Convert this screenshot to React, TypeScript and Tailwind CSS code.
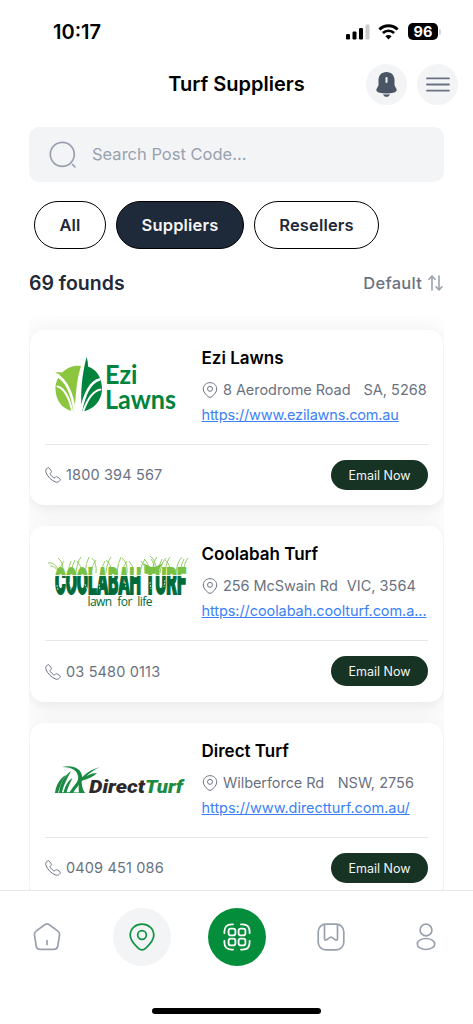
import { ReactNode } from 'react'

type Supplier = {
  name: string
  street: string
  region: string
  regionGap: string
  url: string
  urlTracking: string
  phone: string
  logo: ReactNode
}

function PinIcon({ className, strokeWidth = 1.5 }: { className: string; strokeWidth?: number }) {
  return (
    <svg className={className} viewBox="0 0 24 24" fill="none" stroke="currentColor" strokeWidth={strokeWidth}>
      <path d="M12 23c-1.100 0-2.200-.500-3.100-1.300C5.500 18.600 1.900 14.900 1.900 10.600 1.900 4.600 6.700 1 12 1s10.100 3.600 10.100 9.600c0 4.300-3.600 8-7 11.100-.900.800-2 1.300-3.100 1.300Z" />
      <circle cx="12" cy="10.300" r="3.700" />
    </svg>
  )
}

function PhoneIcon() {
  return (
    <svg className="h-4 w-4 shrink-0" viewBox="0 0 24 24" fill="none" stroke="currentColor" strokeWidth="1.500" strokeLinejoin="round">
      <path d="M6.500 1.900c-.7-1.100-2-1.200-2.900-.4L2.300 2.800C.8 4.300.8 6.500 1.700 8.700c2.600 6 7.500 10.900 13.600 13.600 2.200.9 4.400.8 5.900-.7l1.200-1.300c.9-.9.800-2.200-.3-3l-3.500-2.300c-1-.7-2.100-.500-2.900.3l-.7.700c-.6.6-1.500.6-2.200.1-1.900-1.300-3.500-2.900-4.800-4.800-.5-.7-.500-1.500.1-2.200l.7-.7c.8-.8 1-1.900.3-2.900L6.500 1.900Z" />
    </svg>
  )
}

function EziLogo() {
  return (
    <svg width="130" height="70" viewBox="0 0 130 70">
      <path d="M30 13C17 11 4.500 22 4.500 36 4.500 48 12 57 23.500 58.700 25 43 25 28 30 13Z" fill="#8cc63f" />
      <path d="M4 19.500c6-1 10 0 14 4l-3 4C12 24 9 21 4 19.500Z" fill="#8cc63f" />
      <path d="M35.500 4c1 3 1.700 6 1.500 9.500C45 16 51 24 51 36c0 12-9 21-20 22.700C29 40 31 22 35.500 4Z" fill="#00843d" />
      <g fill="none" stroke="#fff" strokeLinecap="round">
        <path d="M5.500 22C15 27 21 38 24 60" strokeWidth="2.600" />
        <path d="M6.500 33.500C13 35 19 45 21.500 60" strokeWidth="2" />
        <path d="M48.500 26.500C39 29 33 42 29.500 60" strokeWidth="2.600" />
        <path d="M49.500 36.500C41 38 36 47 32 59" strokeWidth="2" />
      </g>
      <g fill="#00843d" fontFamily="Lato, sans-serif" fontWeight="700" fontSize="26.500">
        <text x="54" y="31" textLength="32.500" lengthAdjust="spacingAndGlyphs">Ezi</text>
        <text x="54" y="56" textLength="71" lengthAdjust="spacingAndGlyphs">Lawns</text>
      </g>
    </svg>
  )
}

const blades = [
  [10, 5, 5], [14, 2, -5], [19, 5, 3], [22, 4, 4], [27, 1, 5], [32, 5, -4], [36, 1, 4], [42, 4, 5], [47, 2, -4],
  [52, 5, 4], [57, 1, 5], [62, 4, -5], [68, 1, 4], [73, 5, 5], [78, 2, -5], [84, 5, -4], [91, 3, 5], [96, 5, -4],
  [100, 3, -5], [103, 1, 5], [105, 3, -3], [107, 0, -6], [109, 3, 4], [111, 2, 6], [116, 1, 5], [121, 4, -5], [127, 1, 6], [131, 3, 4], [134, 2, 5],
]

function CoolabahLogo() {
  return (
    <svg className="overflow-visible" width="150" height="60" viewBox="0 0 150 60">
      <defs>
        <linearGradient id="turf" x1="0" y1="0" x2="0" y2="40" gradientUnits="userSpaceOnUse">
          <stop offset="0.490" stopColor="#79c143" />
          <stop offset="0.490" stopColor="#e4f3e0" />
          <stop offset="0.525" stopColor="#e4f3e0" />
          <stop offset="0.525" stopColor="#006b38" />
        </linearGradient>
      </defs>
      <g fill="url(#turf)" stroke="url(#turf)" strokeWidth="1.800" fontFamily="Roboto, sans-serif" fontWeight="900" fontSize="37">
        <text x="10" y="38.500" textLength="86" lengthAdjust="spacingAndGlyphs">COOLABAH</text>
        <text x="100" y="38.500" textLength="41" lengthAdjust="spacingAndGlyphs">TURF</text>
      </g>
      {blades.map(([x, y, lean]) => (
        <path key={x} d={`M${x + 4} 18Q${x + 5} ${y + 6} ${x + 4 + lean} ${y + 1}`} fill="none" stroke="#79c143" strokeWidth=".8" />
      ))}
      <path d="M3 8c5-1 8 2 11 8M5 11c4 0 6 2 9 6" fill="none" stroke="#79c143" strokeWidth=".8" />
      <path d="M98 8l10 5 10-5-5 8h-10Z" fill="#79c143" />
      <path d="M12 30l1 5m12-8 1 8m14-6 2 6m12-6 1 6m13-7 1 6m11-7 1 6m24-6 1 7m14-9-1 7" stroke="#fff" strokeWidth=".7" strokeDasharray="2 1" />
      <text x="42.500" y="51" fill="#006b38" fontFamily="'Open Sans', sans-serif" fontWeight="500" fontSize="12" textLength="65" wordSpacing="3">lawn for life</text>
    </svg>
  )
}

function DirectLogo() {
  return (
    <svg width="134" height="32" viewBox="0 0 134 32">
      <g fill="#1b8a43">
        <path d="M0 28c13-1.500 24-1.500 36 0-12-.5-24 0-36 0Z" />
        <path d="M11 2c12-3 21 3 20 11-1 7-8 12-12 15 5-7 9-12 8-17-1-6-7-9-16-9Z" />
        <path d="M49 2C37 5 27 14 18 28h4C29 16 38 7 49 2ZM46 8c-6 0-12 3-16 8 7-2 12-4 16-8Z" />
        <path d="M4 28C5 20 9 13 15 10 11 15 9 21 7 28ZM8 28c1-9 5-17 12-22-4 8-8 15-9 22ZM12.500 28c1-6 4-12 9-15-3 6-5 10-6 15Z" />
        <path d="M28 28c-1-8 0-14 3-18-1 7 0 14 3 18Z" />
      </g>
      <g fontFamily="Roboto, sans-serif" fontWeight="900" fontStyle="italic" fontSize="19">
        <text x="38" y="27.500" fill="#2d292a" textLength="56" lengthAdjust="spacingAndGlyphs">Direct</text>
        <text x="94" y="27.500" fill="#1b8a43" textLength="38" lengthAdjust="spacingAndGlyphs">Turf</text>
      </g>
    </svg>
  )
}

const suppliers: Supplier[] = [
  {
    name: 'Ezi Lawns', street: '8 Aerodrome Road', region: 'SA, 5268', regionGap: 'gap-[13px]',
    url: 'https://www.ezilawns.com.au', urlTracking: 'tracking-[-0.170px]', phone: '1800 394 567',
    logo: <div className="pl-[6px] pt-[8px]"><EziLogo /></div>,
  },
  {
    name: 'Coolabah Turf', street: '256 McSwain Rd', region: 'VIC, 3564', regionGap: 'gap-[9px]',
    url: 'https://coolabah.coolturf.com.a...', urlTracking: 'tracking-[-0.080px]', phone: '03 5480 0113',
    logo: <div className="pt-[14px]"><CoolabahLogo /></div>,
  },
  {
    name: 'Direct Turf', street: 'Wilberforce Rd', region: 'NSW, 2756', regionGap: 'gap-[13.500px]',
    url: 'https://www.directturf.com.au/', urlTracking: 'tracking-[-0.040px]', phone: '0409 451 086',
    logo: <div className="pl-[6px] pt-[27px]"><DirectLogo /></div>,
  },
]

function SupplierCard({ s }: { s: Supplier }) {
  return (
    <div className="h-[175.500px] shrink-0 rounded-[14px] bg-white px-[15px] shadow-[0_4px_8px_rgba(0,0,0,0.04),0_2px_24px_6px_rgba(0,0,0,0.05)]">
      <div className="flex h-[115px] border-b border-gray-200 pt-[15px]">
        <div className="w-[156.500px] shrink-0">{s.logo}</div>
        <div className="min-w-0 whitespace-nowrap">
          <h2 className="text-[17px] leading-[26px] font-semibold text-black">{s.name}</h2>
          <div className="mt-[6px] flex h-[26px] items-center text-[14.500px] tracking-[-0.060px] text-gray-500">
            <PinIcon className="mr-[5.500px] h-4 w-4 shrink-0" />
            <div className={`flex ${s.regionGap}`}>
              <span>{s.street}</span>
              <span className="tracking-[0.020px]">{s.region}</span>
            </div>
          </div>
          <a className={`block text-[14.500px] leading-[24px] text-[#3b82f6] underline ${s.urlTracking}`}>{s.url}</a>
        </div>
      </div>
      <div className="mt-[15px] flex h-[30px] items-center justify-between">
        <span className="flex items-center gap-[5px] pt-px text-[14.500px] tracking-[0.150px] text-gray-500">
          <PhoneIcon />
          {s.phone}
        </span>
        <button className="h-[30px] w-[97px] rounded-full bg-[#173323] pt-[3px] text-[12.500px] text-gray-100">Email Now</button>
      </div>
    </div>
  )
}

export default function App() {
  return (
    <div className="flex h-[1024px] w-[473px] flex-col overflow-hidden bg-white font-[Inter,sans-serif] text-black">
      <div className="flex h-[63px] items-center justify-between pr-[32px] pl-[53px]">
        <span className="text-[20px] font-semibold">10:17</span>
        <div className="flex items-center">
          <svg width="24" height="16" viewBox="0 0 24 16">
            <rect x="0" y="10" width="4" height="5.500" rx="1.200" />
            <rect x="6.500" y="7.500" width="4" height="8" rx="1.200" />
            <rect x="13" y="4" width="4" height="11.500" rx="1.200" />
            <rect x="19.500" y="0.500" width="4" height="15" rx="1.200" fill="#ccc" />
          </svg>
          <svg className="ml-[8.500px]" width="21" height="16" viewBox="0 0 21 16" fill="none" stroke="#000">
            <path d="M1.400 5.500c5.100-5 13.100-5 18.200 0" strokeWidth="2.800" />
            <path d="M4.900 9c3.100-3 8.100-3 11.200 0" strokeWidth="2.700" />
            <path d="m10.500 15.500 3.100-3.200c-1.700-1.600-4.500-1.600-6.200 0Z" fill="#000" stroke="none" />
          </svg>
          <div className="ml-[9px] flex h-[17px] w-[30px] items-center justify-center rounded-[5px] bg-black text-[14.500px] font-bold text-white">96</div>
          <div className="ml-px h-[6px] w-[2px] rounded-r-full bg-gray-300" />
        </div>
      </div>

      <header className="grid h-[42px] grid-cols-[1fr_auto_1fr] items-center px-[15px]">
        <h1 className="col-start-2 text-[20px] font-semibold">Turf Suppliers</h1>
        <div className="flex justify-end gap-[10px]">
          <button className="flex size-[41px] items-center justify-center rounded-full bg-gray-100 text-gray-600">
            <svg width="21" height="25" viewBox="0 0 21 25" fill="currentColor">
              <path fillRule="evenodd" d="M10.500 0C5.500 0 2.500 3.600 2.500 8v4.500c0 1-.3 1.600-1 2.700C-.4 18 0 19.400 2.700 20.400c4.700 1.500 10.900 1.500 15.600 0 2.700-1 3.100-2.400 1.200-5.200-.7-1.100-1-1.700-1-2.700V8c0-4.400-3-8-8-8Zm0 4.900a1 1 0 0 0-1 1v4.200a1 1 0 0 0 2 0V5.900a1 1 0 0 0-1-1Z" />
              <path d="M7 22.200c2.300.3 4.700.3 7 0-.6 1.600-1.900 2.600-3.500 2.600S7.600 23.800 7 22.200Z" />
            </svg>
          </button>
          <button className="flex size-[41px] items-center justify-center rounded-full bg-gray-100 text-gray-500">
            <svg width="24" height="15" viewBox="0 0 24 15" fill="none" stroke="currentColor" strokeWidth="1.800" strokeLinecap="round">
              <path d="M1 1.400h22M1 7.500h22M1 13.600h22" />
            </svg>
          </button>
        </div>
      </header>

      <div className="mx-[29px] mt-[22px] flex h-[55px] shrink-0 items-center rounded-[10px] bg-gray-100 pl-[20px] text-gray-400">
        <svg width="28" height="28" viewBox="0 0 28 28" fill="none" stroke="currentColor" strokeWidth="1.700" strokeLinecap="round">
          <circle cx="13.300" cy="13.300" r="12" />
          <path d="m23.500 23.500 2.300 2.300" />
        </svg>
        <span className="ml-[15px] text-[16.500px]">Search Post Code...</span>
      </div>

      <div className="mt-[19px] flex gap-[10px] pl-[34px] text-[16.500px] font-semibold tracking-[0.150px] text-gray-800">
        <button className="h-[48px] w-[72px] rounded-full border border-black">All</button>
        <button className="h-[48px] w-[128px] rounded-full border border-black bg-gray-800 text-gray-100">Suppliers</button>
        <button className="h-[48px] w-[125px] rounded-full border border-black">Resellers</button>
      </div>

      <div className="mt-[20px] flex h-[30px] items-center justify-between pr-[30px] pl-[29px]">
        <span className="text-[19.500px] font-semibold text-gray-800">69 founds</span>
        <span className="flex items-center gap-[6px] pb-[2px] text-[16.500px] font-medium tracking-[0.250px] text-gray-500">
          Default
          <svg width="15" height="16" viewBox="0 0 15 16" fill="none" stroke="#9ca3af" strokeWidth="1.600" strokeLinecap="round" strokeLinejoin="round">
            <path d="M4 15V1M1 4.200 4 1l3 3.200M11 1v14M8 11.800l3 3.200 3-3.200" />
          </svg>
        </span>
      </div>

      <main className="mx-[29px] mt-[17px] flex min-h-0 flex-1 flex-col gap-[21px] overflow-hidden px-px pt-[13.500px]">
        {suppliers.map((s) => <SupplierCard key={s.name} s={s} />)}
      </main>

      <nav className="flex h-[134px] shrink-0 flex-col items-center border-t border-gray-200 bg-white text-gray-400">
        <div className="mt-[17px] flex w-full items-center justify-between pr-[18px] pl-[18px]">
          <div className="flex size-[58px] items-center justify-center">
            <svg width="28" height="28" viewBox="0 0 28 28" fill="none" stroke="currentColor" strokeWidth="1.700" strokeLinejoin="round" strokeLinecap="round">
              <path d="M11.700 1.800c1.500-1.200 3.100-1.200 4.600 0l8.300 6.100c1.600 1.200 2.200 2.300 1.900 4.200L24.800 23c-.4 2.300-1.600 3.400-3.900 3.400H7.100c-2.300 0-3.500-1.100-3.900-3.400L1.500 12.100c-.3-1.900.3-3 1.900-4.200Z" />
              <path d="M14 17.500v4" />
            </svg>
          </div>
          <div className="flex size-[58px] items-center justify-center rounded-full bg-gray-100 text-[#0f9444]">
            <PinIcon className="size-[28px]" />
          </div>
          <div className="flex size-[58px] items-center justify-center rounded-full bg-[#048d3a] text-white">
            <svg width="28" height="28" viewBox="0 0 28 28" fill="none" stroke="currentColor" strokeWidth="1.800" strokeLinecap="round">
              <path d="M1.400 10V8.500c0-4.500 2.600-7.100 7.100-7.100H10M18 1.400h1.500c4.500 0 7.100 2.600 7.100 7.100V10M26.600 18v1.500c0 4.500-2.600 7.100-7.100 7.100H18M10 26.600H8.500c-4.500 0-7.100-2.600-7.100-7.100V18" />
              <rect x="5.600" y="5.600" width="6.800" height="6.800" rx="2.200" />
              <rect x="15.600" y="5.600" width="6.800" height="6.800" rx="2.200" />
              <rect x="5.600" y="15.600" width="6.800" height="6.800" rx="2.200" />
              <rect x="15.600" y="15.600" width="6.800" height="6.800" rx="2.200" />
            </svg>
          </div>
          <div className="flex size-[58px] items-center justify-center">
            <svg width="28" height="28" viewBox="0 0 28 28" fill="none" stroke="currentColor" strokeWidth="1.700" strokeLinejoin="round">
              <rect x="1.200" y="1.200" width="25.600" height="25.600" rx="7.500" />
              <path d="M7.500 1.400v14.200c0 1.600 1.100 2 2.200 1.100l3.400-2.300c.6-.4 1.200-.4 1.800 0l3.400 2.300c1.100.9 2.200.500 2.200-1.100V1.400" />
            </svg>
          </div>
          <div className="flex size-[58px] items-center justify-center">
            <svg width="28" height="28" viewBox="0 0 28 28" fill="none" stroke="currentColor" strokeWidth="1.700">
              <circle cx="14" cy="7" r="5.900" />
              <ellipse cx="14" cy="21" rx="8.700" ry="5.500" />
            </svg>
          </div>
        </div>
        <div className="mt-[42px] h-[6px] w-[169px] rounded-full bg-black" />
      </nav>
    </div>
  )
}
